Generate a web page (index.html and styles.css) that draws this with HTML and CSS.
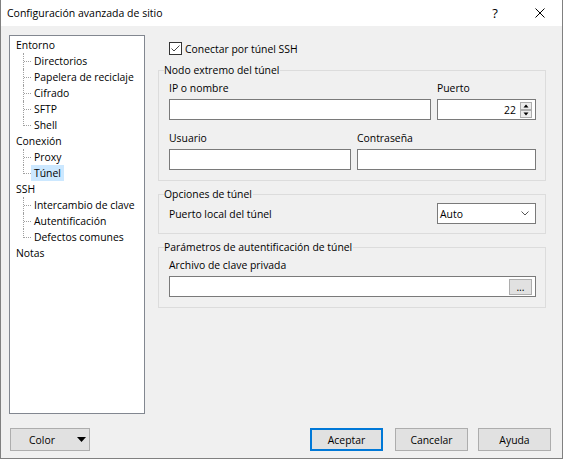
FILE: index.html
```html
<!DOCTYPE html>
<html lang="es">
<head>
<meta charset="utf-8">
<title>Configuración avanzada de sitio</title>
<link rel="stylesheet" href="styles.css">
</head>
<body>
<div class="window">
  <div class="titlebar">
    <span class="title">Configuración avanzada de sitio</span>
    <span class="help">?</span>
    <span class="close"><svg width="10" height="10" viewBox="0 0 10 10"><path d="M0.5 0.5L9.5 9.5M9.5 0.5L0.5 9.5" stroke="#000" stroke-width="1" fill="none"/></svg></span>
  </div>
  <div class="main">
    <ul class="tree">
      <li class="node"><span>Entorno</span></li>
      <li class="child"><span>Directorios</span></li>
      <li class="child"><span>Papelera de reciclaje</span></li>
      <li class="child"><span>Cifrado</span></li>
      <li class="child"><span>SFTP</span></li>
      <li class="child last"><span>Shell</span></li>
      <li class="node"><span>Conexión</span></li>
      <li class="child"><span>Proxy</span></li>
      <li class="child last"><span class="selected">Túnel</span></li>
      <li class="node"><span>SSH</span></li>
      <li class="child"><span>Intercambio de clave</span></li>
      <li class="child"><span>Autentificación</span></li>
      <li class="child last"><span>Defectos comunes</span></li>
      <li class="node"><span>Notas</span></li>
    </ul>
    <div class="content">
      <div class="check-row">
        <span class="checkbox"><svg width="13" height="13" viewBox="0 0 13 13"><rect x="0.5" y="0.5" width="12" height="12" fill="#fff" stroke="#333"/><path d="M2.5 6.5L5 9L10.5 3.5" stroke="#444" stroke-width="1" fill="none"/></svg></span>
        <span>Conectar por túnel SSH</span>
      </div>
      <fieldset class="group g1">
        <legend>Nodo extremo del túnel</legend>
        <div class="row">
          <div class="field w-host"><div class="lbl">IP o nombre</div><div class="input"></div></div>
          <div class="field w-port"><div class="lbl">Puerto</div>
            <div class="input spin"><span class="val">22</span>
              <svg class="spinner" width="12" height="16" viewBox="0 0 12 16"><rect x="0.5" y="0.5" width="11" height="7" fill="#ececec" stroke="#adadad"/><polygon points="3.5,5.5 8.5,5.5 6,2.5" fill="#000"/><rect x="0.5" y="8.5" width="11" height="7" fill="#ececec" stroke="#adadad"/><polygon points="3.5,10.5 8.5,10.5 6,13.5" fill="#000"/></svg>
            </div>
          </div>
        </div>
        <div class="row">
          <div class="field w-user"><div class="lbl">Usuario</div><div class="input"></div></div>
          <div class="field w-pass"><div class="lbl">Contraseña</div><div class="input"></div></div>
        </div>
      </fieldset>
      <fieldset class="group g2">
        <legend>Opciones de túnel</legend>
        <div class="opt-row">
          <span>Puerto local del túnel</span>
          <div class="select"><span>Auto</span><svg width="8" height="5" viewBox="0 0 8 5"><path d="M0.5 0.5L4 4L7.5 0.5" stroke="#555" stroke-width="1" fill="none"/></svg></div>
        </div>
      </fieldset>
      <fieldset class="group g3">
        <legend>Parámetros de autentificación de túnel</legend>
        <div class="lbl">Archivo de clave privada</div>
        <div class="input file"><span class="browse">...</span></div>
      </fieldset>
    </div>
  </div>
  <div class="footer">
    <div class="btn color"><span>Color</span><svg class="caret" width="9" height="5" viewBox="0 0 9 5"><polygon points="0,0 9,0 4.5,5" fill="#000"/></svg></div>
    <div class="btn default">Aceptar</div>
    <div class="btn cancel">Cancelar</div>
    <div class="btn help-btn">Ayuda</div>
  </div>
</div>
</body>
</html>
```
FILE: styles.css
```css
* { box-sizing: border-box; }
html, body { margin: 0; padding: 0; }
body {
  background: #f0f0f0;
  font-family: "Open Sans", "Liberation Sans", sans-serif;
  font-size: 10.4px;
  color: #000;
}
.window {
  width: 563px;
  height: 459px;
  border: 1px solid #808080;
  border-top: none;
  background: #f0f0f0;
  display: flex;
  flex-direction: column;
}
.titlebar {
  height: 26px;
  flex: none;
  background: #fff;
  display: flex;
  align-items: center;
  padding-left: 6px;
}
.title { flex: 1; font-size: 10.5px; }
.help {
  width: 20px;
  text-align: center;
  font-size: 13px;
  margin-right: 30px;
}
.close { display: flex; margin-right: 17px; }

.main { display: flex; height: 388px; flex: none; }
.tree {
  list-style: none;
  margin: 9px 0 0 8px;
  padding: 1px 0 0 0;
  width: 136px;
  height: 379px;
  background: #fff;
  border: 1px solid #828790;
}
.tree li {
  height: 16px;
  line-height: 16px;
  position: relative;
  white-space: nowrap;
}
.tree li span { display: inline-block; height: 16px; padding: 0 3px; }
.tree .node { padding-left: 3px; }
.tree .child { padding-left: 21px; }
.tree .child::before {
  content: "";
  position: absolute;
  left: 13px;
  top: 0;
  height: 16px;
  border-left: 1px dotted #a0a0a0;
}
.tree .child.last::before { height: 9px; }
.tree .child::after {
  content: "";
  position: absolute;
  left: 14px;
  top: 8px;
  width: 7px;
  border-top: 1px dotted #a0a0a0;
}
.tree .selected { background: #cce8ff; }

.content { width: 388px; margin: 16px 0 0 13px; }
.check-row {
  display: flex;
  align-items: center;
  height: 13px;
  padding-left: 11px;
  gap: 3px;
}
.checkbox { display: flex; }

.group {
  border: 1px solid #dcdcdc;
  margin: 0;
  padding: 3px 9px 10px 10px;
  min-width: 0;
}
.group legend {
  padding: 0 1px 0 0;
  margin-left: -5px;
  line-height: 16px;
}
.g1 { margin-top: 7px; }
.g2 { margin-top: 5px; padding-top: 1px; padding-bottom: 9px; }
.g3 { margin-top: 5px; padding-top: 3px; }

.lbl { height: 15px; line-height: 15px; margin-bottom: 3px; }
.input {
  height: 21px;
  background: #fff;
  border: 1px solid #7a7a7a;
}
.row { display: flex; gap: 6px; }
.row + .row { margin-top: 11px; }
.w-host { width: 262px; }
.w-port { width: 99px; }
.w-user { width: 182px; }
.w-pass { width: 179px; }

.spin {
  display: flex;
  align-items: center;
  justify-content: flex-end;
  padding-right: 3px;
}
.val { margin-right: 4px; }
.spinner { display: block; }

.opt-row {
  display: flex;
  align-items: center;
  justify-content: space-between;
  height: 21px;
}
.select {
  width: 99px;
  height: 21px;
  background: #fff;
  border: 1px solid #7a7a7a;
  display: flex;
  align-items: center;
  justify-content: space-between;
  padding: 0 6px 0 2px;
}
.select svg { display: block; }

.file {
  display: flex;
  align-items: center;
  justify-content: flex-end;
  padding-right: 3px;
}
.browse {
  width: 23px;
  height: 16px;
  background: #e1e1e1;
  border: 1px solid #adadad;
  text-align: center;
  line-height: 14px;
}

.footer {
  display: flex;
  padding: 14px 11px 0 9px;
}
.btn {
  height: 23px;
  width: 73px;
  background: #e1e1e1;
  border: 1px solid #adadad;
  display: flex;
  align-items: center;
  justify-content: center;
}
.btn.color {
  width: 80px;
  justify-content: flex-start;
  padding-left: 18px;
  padding-right: 3px;
}
.caret { margin-left: auto; display: block; }
.btn.default { border: 2px solid #0078d7; margin-left: auto; }
.btn.cancel { margin-left: 12px; }
.btn.help-btn { margin-left: 10px; }
```
